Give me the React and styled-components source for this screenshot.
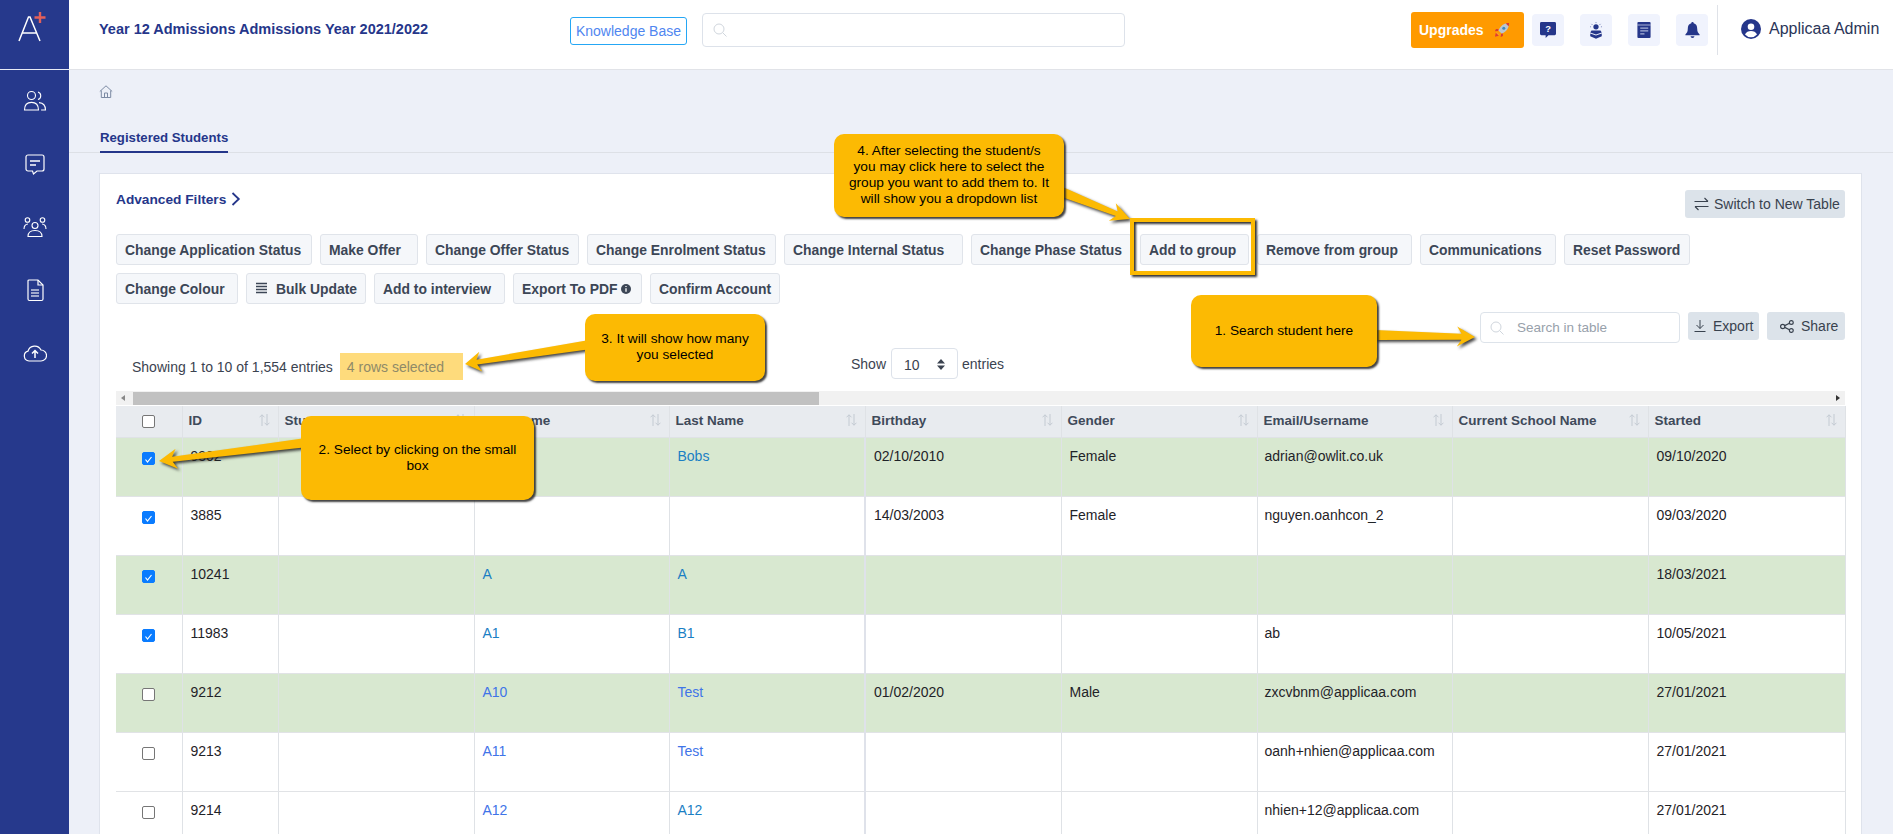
import React from "react";
import styled, { createGlobalStyle } from "styled-components";

const Global = createGlobalStyle`
  html, body { margin: 0; padding: 0; height: 100%; overflow: hidden; background: #edf0f8; }
  body { font-family: "Liberation Sans", Arial, sans-serif; color: #212529; }
  * { box-sizing: border-box; }
`;

const Shell = styled.div`display: flex; height: 100vh; position: relative; overflow: hidden;`;
const Sidebar = styled.aside`width: 69px; flex: none; background: #26398c;`;
const LogoBox = styled.div`height: 70px; border-bottom: 1px solid #e8ebf5; display: flex; align-items: flex-start; padding: 11px 0 0 17px;`;
const Nav = styled.nav`display: flex; flex-direction: column; align-items: center; gap: 39px; padding-top: 19px;`;
const Main = styled.main`flex: 1; min-width: 0; display: flex; flex-direction: column;`;
const Header = styled.header`height: 70px; flex: none; background: #fff; border-bottom: 1px solid #e1e3e8; display: flex; align-items: flex-start; padding-left: 30px;`;
const Title = styled.h1`margin: 20px 0 0; width: 363px; font-size: 14.5px; line-height: 18px; font-weight: 700; color: #25368a; white-space: nowrap;`;
const KnowledgeBase = styled.a`margin: 17px 0 0 108px; width: 117px; height: 28px; border: 1px solid #25a7f5; border-radius: 3px; color: #4f86f0; font-size: 14px; display: flex; align-items: center; justify-content: center;`;
const TopSearch = styled.div`margin: 13px 0 0 15px; width: 423px; height: 34px; border: 1px solid #dde2ea; border-radius: 4px; display: flex; align-items: center; padding-left: 10px; color: #c8ced6;`;
const Upgrade = styled.button`margin: 12px 0 0 286px; width: 113px; height: 36px; border: 0; border-radius: 3px; background: #ff9a00; color: #fff; font: 700 14px "Liberation Sans", Arial, sans-serif; display: flex; align-items: center; padding: 0 0 0 8px; gap: 10px;`;
const IconTiles = styled.div`display: flex; gap: 16px; margin: 14px 0 0 8px;`;
const IconTile = styled.div`width: 32px; height: 32px; border-radius: 4px; background: #f0f3fd; display: flex; align-items: center; justify-content: center;`;
const VRule = styled.div`width: 1px; height: 50px; margin: 5px 0 0 9px; background: #dfe2e8;`;
const UserBox = styled.div`display: flex; align-items: center; gap: 8px; margin: 18px 0 0 23px; color: #2b3558; font-size: 16px; height: 22px; white-space: nowrap;`;

const Crumb = styled.div`height: 52px; padding: 14px 0 0 30px; flex: none;`;
const TabBar = styled.div`height: 31px; flex: none; border-bottom: 1px solid #dde0e6; padding-left: 31px; display: flex;`;
const Tab = styled.div`height: 31px; border-bottom: 2px solid #25368a; font-size: 13.2px; font-weight: 700; color: #25368a; line-height: 16px; padding-top: 8px; white-space: nowrap;`;
const Card = styled.section`margin: 20px 31px 0 30px; background: #fff; border: 1px solid #dfe3ec; padding: 16px 16px 0 16px; flex: 1;`;
const TopRow = styled.div`display: flex; justify-content: space-between; align-items: flex-start; height: 44px;`;
const Filters = styled.div`font-size: 13.7px; font-weight: 700; color: #25368a; display: flex; align-items: center; gap: 5px; height: 18px;`;
const GhostButton = styled.button`height: 28px; width: ${p => p.$w}px; border: 0; border-radius: 3px; background: #dce3ea; color: #39424e; font: 14px "Liberation Sans", Arial, sans-serif; display: flex; align-items: center; gap: ${p => p.$gap}px; padding: 0 0 0 ${p => p.$left}px; white-space: nowrap; flex: none;`;
const ActionRow = styled.div`display: flex; gap: 8px; margin-bottom: 8px;`;
const Action = styled.button`height: 31px; border: 1px solid #e0e4ea; border-radius: 3px; background: #f5f7fa; color: #3c4656; font: 700 13.9px "Liberation Sans", Arial, sans-serif; padding: 0 0 0 8px; display: flex; align-items: center; gap: ${p => p.$gap || 8}px; white-space: nowrap; flex: none; width: ${p => p.$w}px;`;
const Stats = styled.div`display: grid; grid-template-columns: 735px 1fr auto; height: 79px;`;
const Info = styled.div`display: flex; align-items: center; align-self: end; gap: 7px; padding-left: 16px; margin-bottom: 11px; font-size: 14px; color: #3b4350;`;
const Selected = styled.span`height: 27px; width: 123px; background: #fedb7c; color: #8f8a68; display: flex; align-items: center; padding-left: 7px;`;
const Length = styled.div`display: flex; align-items: center; align-self: end; gap: 4px; margin-bottom: 12px; font-size: 14px; color: #3b4350;`;
const LengthSelect = styled.div`width: 67px; height: 31px; margin-left: 1px; border: 1px solid #dde2ea; border-radius: 4px; display: flex; align-items: center; justify-content: space-between; padding: 2px 12px 0 12px; color: #3b4350; font-size: 14px;`;
const Tools = styled.div`display: flex; gap: 8px; align-items: flex-start;`;
const TableSearch = styled.div`width: 200px; height: 31px; border: 1px solid #dde3ea; border-radius: 4px; display: flex; align-items: center; gap: 13px; padding-left: 9px; color: #98a1ab; font-size: 13.5px;`;
const ScrollBar = styled.div`height: 14px; background: #f1f1f1; display: flex; align-items: center; justify-content: space-between; padding: 0 5px;`;
const Thumb = styled.div`height: 13px; width: 686px; margin: 0 auto 0 8px; background: #c1c1c1;`;
const Arrowhead = styled.span`width: 0; height: 0; border-top: 3px solid transparent; border-bottom: 3px solid transparent; ${p => p.$right ? "border-left: 4px solid #333;" : "border-right: 4px solid #888;"}`;
const Table = styled.table`width: 1729px; table-layout: fixed; border-collapse: collapse; margin-top: 1px;`;
const Th = styled.th`height: 31px; background: #e8ebef; text-align: left; padding: 0 8px 2px 6px; font-size: 13.5px; font-weight: 700; color: #3f4a5a; border-right: 1px solid #dfe2e6; border-bottom: 1px solid #dfe2e6; white-space: nowrap;`;
const ThInner = styled.div`display: flex; justify-content: space-between; align-items: center;`;
const Tr = styled.tr`background: ${p => p.$green ? "#d8e8d0" : "#fff"}; height: 59px;`;
const Td = styled.td`vertical-align: top; padding: 10px 8px 0 ${p => p.$left || 8}px; height: 59px; font-size: 14px; line-height: 16px; color: #1f2328; border-right: ${p => p.$thick ? "2px solid #dfe2ea" : "1px solid #dfe2e6"}; border-bottom: 1px solid #e1e3e6; white-space: nowrap; overflow: hidden;`;
const CheckCell = styled(Td)`padding: 14px 0 0 26px;`;
const HeadCheckCell = styled(Th)`padding: 0 0 0 26px;`;
const Check = styled.span`display: block; width: 13px; height: 13px; border-radius: 2px; background: ${p => p.$on ? "#0a7cff" : "#fff"}; border: 1px solid ${p => p.$on ? "#0a7cff" : "#767676"};`;
const Link = styled.a`color: ${p => p.$old ? "#3f74e8" : "#1a7fc4"};`;

const Callout = styled.div`position: absolute; left: ${p => p.$x}px; top: ${p => p.$y}px; width: ${p => p.$w}px; height: ${p => p.$h}px; padding-top: ${p => p.$top}px; background: #fcba03; border-radius: 10px; box-shadow: 2px 2px 2px rgba(30,30,30,.85); color: #000; font-size: 13.7px; line-height: 16px; text-align: center; white-space: nowrap; z-index: 4;`;
const Highlight = styled.div`position: absolute; left: 1130px; top: 218px; width: 125px; height: 57px; border: 4px solid #fcba03; filter: drop-shadow(2px 2px 1px #333); z-index: 3;`;
const Arrows = styled.svg`position: absolute; inset: 0; width: 1893px; height: 834px; pointer-events: none; z-index: 3; filter: drop-shadow(2px 2px 1.5px rgba(30,30,30,.85));`;

const arrowPoints = (x1, y1, x2, y2, tail, neck, len, head) => {
  const L = Math.hypot(x2 - x1, y2 - y1), ux = (x2 - x1) / L, uy = (y2 - y1) / L, nx = -uy, ny = ux;
  const at = (back, side) => `${(x2 - ux * back + nx * side).toFixed(1)},${(y2 - uy * back + ny * side).toFixed(1)}`;
  return [at(0, 0), at(len, head / 2), at(len * 0.75, neck / 2), at(L, tail / 2), at(L, -tail / 2), at(len * 0.75, -neck / 2), at(len, -head / 2)].join(" ");
};

const S = "#fff";
const NavUsers = () => (<svg width="24" height="24" viewBox="0 0 24 24" fill="none" stroke={S} strokeWidth="1.1"><circle cx="8.5" cy="6.5" r="4" /><path d="M15 3a4 4 0 0 1 0 7.6" /><path d="M1.5 21c0-5 3-7.6 7-7.6s7 2.6 7 7.6z" /><path d="M16 13.6c3.6.3 6.5 2.8 6.5 7.4h-4.4" /></svg>);
const NavChat = () => (<svg width="24" height="24" viewBox="0 0 24 24" fill="none" stroke={S} strokeWidth="1.2"><path d="M5 3h14a2 2 0 0 1 2 2v12a2 2 0 0 1-2 2h-5l-3.5 3-1-3H5a2 2 0 0 1-2-2V5a2 2 0 0 1 2-2z" /><path d="M7 9h10M7 13h6" strokeWidth="1.6" /></svg>);
const NavGroup = () => (<svg width="24" height="24" viewBox="0 0 24 24" fill="none" stroke={S} strokeWidth="1.1"><circle cx="12" cy="10.5" r="3" /><circle cx="4.5" cy="5" r="2.3" /><circle cx="19.5" cy="5" r="2.3" /><path d="M1 14c0-3 1.5-5 4-5M23 14c0-3-1.5-5-4-5" /><path d="M5 21.5c0-4 3-6 7-6s7 2 7 6z" /></svg>);
const NavDoc = () => (<svg width="24" height="24" viewBox="0 0 24 24" fill="none" stroke={S} strokeWidth="1.2"><path d="M6 2h9l5 5v14a1.5 1.5 0 0 1-1.5 1.5h-12A1.5 1.5 0 0 1 5 21V3a1 1 0 0 1 1-1z" /><path d="M15 2v5h5" /><path d="M8 12h8M8 15h8M8 18h8" strokeWidth="1.4" opacity=".75" /></svg>);
const NavCloud = () => (<svg width="24" height="24" viewBox="0 0 24 24" fill="none" stroke={S} strokeWidth="1.2"><path d="M6 20a5 5 0 0 1-1-9.8A7 7 0 0 1 18 9a5.5 5.5 0 0 1 0 11z" /><path d="M12 17v-7M9 12.5l3-3 3 3" strokeWidth="1.5" /></svg>);
const Logo = () => (<svg width="30" height="32" viewBox="0 0 30 32"><path d="M2 30 L11.5 6 L13 6 L23 30 M5.5 22 H19.5" fill="none" stroke="#fff" strokeWidth="1.5" /><path d="M23 1v11M17.5 6.5h11" stroke="#e2605a" strokeWidth="2.4" fill="none" /></svg>);
const Rocket = () => (<svg width="16" height="16" viewBox="0 0 18 18"><path d="M3 11l-2.5 6 6-2.5z" fill="#f7a128" /><path d="M2 12l-1 4.5 4.5-1z" fill="#e23b2e" /><path d="M5 8H2.2L1 10.5 5 10zM10 13v2.8L7.5 17 8 13z" fill="#d83b32" /><path d="M5 9.5C7 4.5 11 1 17 1c0 6-3.500 10-8.500 12z" fill="#b9c6d2" /><path d="M13 1.500C14.500 1 16 1 17 1c0 1-.1 2.500-.5 4z" fill="#d83b32" /><circle cx="11" cy="7" r="1.700" fill="#3b88c3" /></svg>);
const Q = () => (<svg width="16" height="16" viewBox="0 0 17 17"><path d="M1.500 0h14A1.500 1.500 0 0 1 17 1.500v11a1.500 1.500 0 0 1-1.500 1.500H9l-3 3v-3H1.500A1.500 1.500 0 0 1 0 12.500v-11A1.500 1.500 0 0 1 1.500 0z" fill="#25368a" /><text x="8.500" y="11" fontSize="10" fontWeight="700" fill="#fff" textAnchor="middle" fontFamily="Liberation Sans">?</text></svg>);
const Agent = () => (<svg width="14" height="17" viewBox="0 0 17 20" fill="#25368a"><circle cx="8.500" cy="5.500" r="3.200" /><path d="M8.500 0v1M3 2l1 1M14 2l-1 1M1.500 5.500h1M14.500 5.500h1" stroke="#25368a" strokeWidth=".8" /><path d="M3 10h11l1.500 2.500L8.500 15 1.500 12.500z" /><path d="M1.500 13.500l7 2.500 7-2.500V17l-7 3-7-3z" /></svg>);
const Book = () => (<svg width="14" height="16" viewBox="0 0 14 17"><rect width="14" height="17" rx="1" fill="#25368a" /><path d="M0 3.200h14" stroke="#f0f3fd" strokeWidth=".7" /><path d="M3 6.500h8.500M3 9.500h8.500M3 12.500h4.500" stroke="#a9b3d8" strokeWidth="1.300" /></svg>);
const Bell = () => (<svg width="15" height="16" viewBox="0 0 16 18" fill="#25368a"><path d="M8 0a1.300 1.300 0 0 1 1.300 1.500C12 2.100 13.300 4.400 13.300 7.500c0 3.500 1 4.500 2.700 6.500v1H0v-1c1.700-2 2.700-3 2.700-6.500C2.700 4.400 4 2.100 6.700 1.500A1.300 1.300 0 0 1 8 0z" /><path d="M5.800 16h4.400a2.200 2 0 0 1-4.400 0z" /></svg>);
const UserIco = () => (<svg width="20" height="20" viewBox="0 0 20 20"><circle cx="10" cy="10" r="10" fill="#25368a" /><circle cx="10" cy="7.800" r="3.300" fill="#fff" /><path d="M4 15.500c1-2.500 3.500-3.500 6-3.500s5 1 6 3.500a8 8 0 0 1-12 0z" fill="#fff" /></svg>);
const Home = () => (<svg width="14" height="13" viewBox="0 0 14 13" fill="none" stroke="#7c8aa3" strokeWidth="1"><path d="M.8 6.500L7 .8l6.200 5.700M2.300 5.500v7h9.400v-7" /><path d="M5.500 12.500V8h3v4.500" /></svg>);
const Chevron = () => (<svg width="10" height="14" viewBox="0 0 10 14" fill="none" stroke="#25368a" strokeWidth="1.800"><path d="M1.500 1l6.300 6-6.300 6" /></svg>);
const Glass = ({ c = "#d0d6dd" }) => (<svg width="14" height="14" viewBox="0 0 14 14" fill="none" stroke={c} strokeWidth="1"><circle cx="6" cy="6" r="5" /><path d="M9.700 9.700L13.500 13.500" /></svg>);
const Swap = () => (<svg width="15" height="14" viewBox="0 0 14 14" fill="none" stroke="#39424e" strokeWidth="1.100"><path d="M0 4.500h13.500M10 1l3.500 3.500M14 9.500H.5M4 13L.5 9.500" /></svg>);
const Lines = () => (<svg width="13" height="13" viewBox="0 0 13 13" stroke="#3c4656" strokeWidth="1.300"><path d="M1 1.500h11M1 4.500h11M1 7.500h11M1 10.500h11" /></svg>);
const InfoDot = () => (<svg width="10" height="10" viewBox="0 0 10 10"><circle cx="5" cy="5" r="5" fill="#3c4656" /><path d="M5 2v1M5 4.300v3.500" stroke="#fff" strokeWidth="1.300" /></svg>);
const Carets = () => (<svg width="8" height="11" viewBox="0 0 8 11" fill="#3b4350"><path d="M4 0l4 4.500H0zM4 11L0 6.500h8z" /></svg>);
const Down = () => (<svg width="12" height="12" viewBox="0 0 12 12" fill="none" stroke="#39424e" strokeWidth="1"><path d="M6 0v8.500M2.500 5L6 8.500 9.500 5M.5 11.500h11" /></svg>);
const ShareIco = () => (<svg width="14" height="13" viewBox="0 0 13 12" fill="none" stroke="#39424e" strokeWidth="1.100"><circle cx="2.500" cy="6" r="2" /><circle cx="10.500" cy="2.300" r="1.800" /><circle cx="10.500" cy="9.700" r="1.800" /><path d="M4.400 5.200l4.400-2.200M4.400 6.800l4.400 2.200" /></svg>);
const Sort = () => (<svg width="11" height="12" viewBox="0 0 11 12" fill="none" stroke="#c3cad2" strokeWidth="1"><path d="M3 12V.8M.5 3.300L3 .8l2.500 2.500M8 0v11.200M5.500 8.700L8 11.200l2.500-2.500" /></svg>);
const Tick = () => (<svg width="11" height="11" viewBox="0 0 11 11" fill="none" stroke="#fff" strokeWidth="1.200" style={{ display: "block" }}><path d="M2.500 6.500l2 2.500 4-5" /></svg>);

const row1 = [["Change Application Status", 196], ["Make Offer", 98], ["Change Offer Status", 153], ["Change Enrolment Status", 189], ["Change Internal Status", 179], ["Change Phase Status", 161], ["Add to group", 109], ["Remove from group", 155], ["Communications", 136], ["Reset Password", 126]];
const columns = ["ID", "Student Code", "First Name", "Last Name", "Birthday", "Gender", "Email/Username", "Current School Name", "Started"];
const widths = [66, 96, 196, 195, 196, 196, 196, 195, 196, 197];
const rows = [
  { on: 1, green: 1, id: "9302", last: "Bobs", bday: "02/10/2010", gender: "Female", mail: "adrian@owlit.co.uk", start: "09/10/2020" },
  { on: 1, id: "3885", bday: "14/03/2003", gender: "Female", mail: "nguyen.oanhcon_2", start: "09/03/2020" },
  { on: 1, green: 1, id: "10241", first: "A", last: "A", start: "18/03/2021" },
  { on: 1, id: "11983", first: "A1", last: "B1", mail: "ab", start: "10/05/2021" },
  { green: 1, id: "9212", first: "A10", last: "Test", bday: "01/02/2020", gender: "Male", mail: "zxcvbnm@applicaa.com", start: "27/01/2021" },
  { id: "9213", first: "A11", last: "Test", mail: "oanh+nhien@applicaa.com", start: "27/01/2021" },
  { id: "9214", first: "A12", last: "A12", mail: "nhien+12@applicaa.com", start: "27/01/2021" },
];

export default function App() {
  return (
    <Shell>
      <Global />
      <Sidebar>
        <LogoBox><Logo /></LogoBox>
        <Nav><NavUsers /><NavChat /><NavGroup /><NavDoc /><NavCloud /></Nav>
      </Sidebar>
      <Main>
        <Header>
          <Title>Year 12 Admissions Admissions Year 2021/2022</Title>
          <KnowledgeBase>Knowledge Base</KnowledgeBase>
          <TopSearch><Glass /></TopSearch>
          <Upgrade>Upgrades <Rocket /></Upgrade>
          <IconTiles>
            <IconTile><Q /></IconTile>
            <IconTile><Agent /></IconTile>
            <IconTile><Book /></IconTile>
            <IconTile><Bell /></IconTile>
          </IconTiles>
          <VRule />
          <UserBox><UserIco />Applicaa Admin</UserBox>
        </Header>
        <Crumb><Home /></Crumb>
        <TabBar><Tab>Registered Students</Tab></TabBar>
        <Card>
          <TopRow>
            <Filters>Advanced Filters <Chevron /></Filters>
            <GhostButton $w={160} $left={9} $gap={5}><Swap />Switch to New Table</GhostButton>
          </TopRow>
          <ActionRow>
            {row1.map(([t, w]) => <Action key={t} $w={w}>{t}</Action>)}
          </ActionRow>
          <ActionRow>
            <Action $w={122}>Change Colour</Action>
            <Action $w={120}><Lines />Bulk Update</Action>
            <Action $w={131}>Add to interview</Action>
            <Action $w={129} $gap={4}>Export To PDF <InfoDot /></Action>
            <Action $w={130}>Confirm Account</Action>
          </ActionRow>
          <Stats>
            <Info>Showing 1 to 10 of 1,554 entries <Selected>4 rows selected</Selected></Info>
            <Length>Show <LengthSelect>10 <Carets /></LengthSelect> entries</Length>
            <Tools>
              <TableSearch><Glass />Search in table</TableSearch>
              <GhostButton $w={71} $left={6} $gap={7}><Down />Export</GhostButton>
              <GhostButton $w={78} $left={13} $gap={7}><ShareIco />Share</GhostButton>
            </Tools>
          </Stats>
          <ScrollBar><Arrowhead /><Thumb /><Arrowhead $right /></ScrollBar>
          <Table>
            <colgroup>{widths.map((w, i) => <col key={i} width={w} />)}</colgroup>
            <thead>
              <tr>
                <HeadCheckCell><Check /></HeadCheckCell>
                {columns.map(c => <Th key={c}><ThInner>{c}<Sort /></ThInner></Th>)}
              </tr>
            </thead>
            <tbody>
              {rows.map((r, i) => (
                <Tr key={r.id} $green={r.green}>
                  <CheckCell><Check $on={r.on}>{r.on ? <Tick /> : null}</Check></CheckCell>
                  <Td>{r.id}</Td>
                  <Td />
                  <Td><Link $old={i > 3}>{r.first}</Link></Td>
                  <Td $thick><Link $old={i > 3 && i < 6}>{r.last}</Link></Td>
                  <Td>{r.bday}</Td>
                  <Td>{r.gender}</Td>
                  <Td $left={7}>{r.mail}</Td>
                  <Td />
                  <Td>{r.start}</Td>
                </Tr>
              ))}
            </tbody>
          </Table>
        </Card>
      </Main>

      <Arrows viewBox="0 0 1893 834">
        <polygon fill="#fcba03" points={arrowPoints(1062, 192, 1130, 219, 10, 5, 19, 19)} />
        <polygon fill="#fcba03" points={arrowPoints(1375, 335, 1475, 337, 10, 6, 18, 20)} />
        <polygon fill="#fcba03" points={arrowPoints(587, 345, 465, 364, 9, 5, 16, 20)} />
        <polygon fill="#fcba03" points={arrowPoints(303, 443, 159, 461, 9, 5, 18, 20)} />
      </Arrows>
      <Highlight />
      <Callout $x={834} $y={134} $w={230} $h={83} $top={9}>4. After selecting the student/s<br />you may click here to select the<br />group you want to add them to. It<br />will show you a dropdown list</Callout>
      <Callout $x={1191} $y={295} $w={186} $h={72} $top={28}>1. Search student here</Callout>
      <Callout $x={585} $y={314} $w={180} $h={67} $top={17}>3. It will show how many<br />you selected</Callout>
      <Callout $x={301} $y={416} $w={233} $h={84} $top={26}>2. Select by clicking on the small<br />box</Callout>
    </Shell>
  );
}
